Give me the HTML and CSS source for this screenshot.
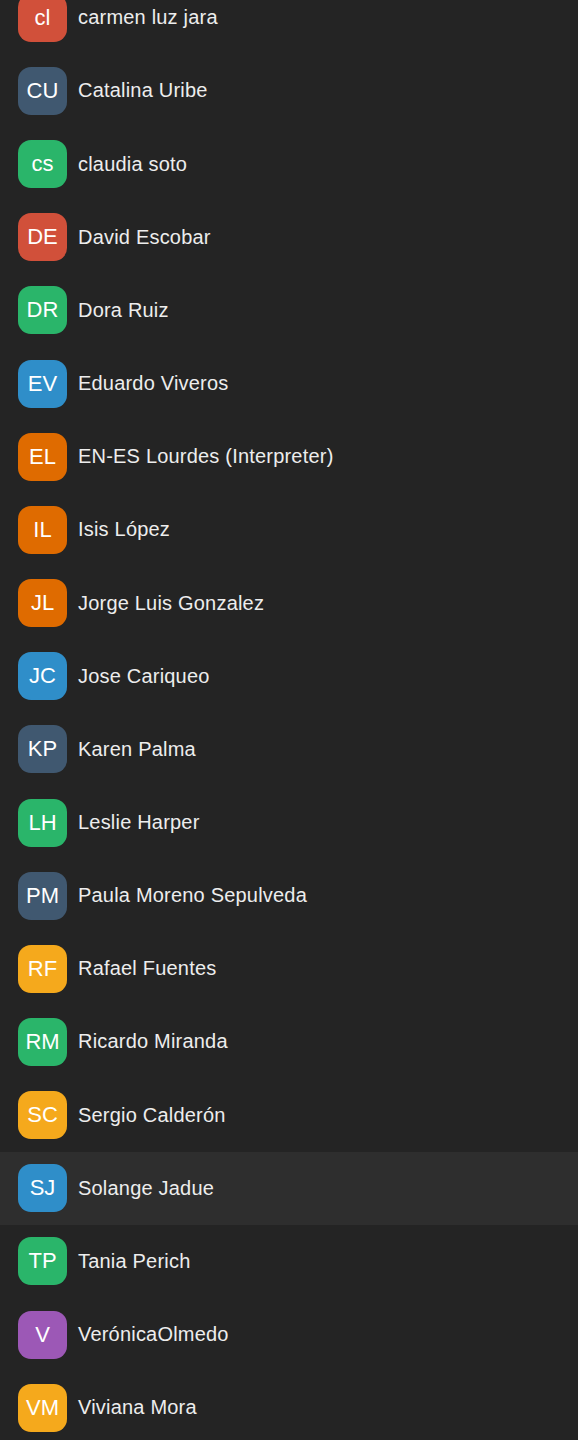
FILE: index.html
```html
<!DOCTYPE html>
<html lang="en">
<head>
    <meta charset="UTF-8">
    <meta name="viewport" content="width=device-width, initial-scale=1.0">
    <link rel="stylesheet" href="styles.css">
    <title>Participants</title>
</head>
<body>
    <ul class="participant-list">
        <li class="participant"><span class="avatar red">cl</span><span class="name">carmen luz jara</span></li>
        <li class="participant"><span class="avatar slate">CU</span><span class="name">Catalina Uribe</span></li>
        <li class="participant"><span class="avatar green">cs</span><span class="name">claudia soto</span></li>
        <li class="participant"><span class="avatar red">DE</span><span class="name">David Escobar</span></li>
        <li class="participant"><span class="avatar green">DR</span><span class="name">Dora Ruiz</span></li>
        <li class="participant"><span class="avatar blue">EV</span><span class="name">Eduardo Viveros</span></li>
        <li class="participant"><span class="avatar orange">EL</span><span class="name">EN-ES Lourdes (Interpreter)</span></li>
        <li class="participant"><span class="avatar orange">IL</span><span class="name">Isis López</span></li>
        <li class="participant"><span class="avatar orange">JL</span><span class="name">Jorge Luis Gonzalez</span></li>
        <li class="participant"><span class="avatar blue">JC</span><span class="name">Jose Cariqueo</span></li>
        <li class="participant"><span class="avatar slate">KP</span><span class="name">Karen Palma</span></li>
        <li class="participant"><span class="avatar green">LH</span><span class="name">Leslie Harper</span></li>
        <li class="participant"><span class="avatar slate">PM</span><span class="name">Paula Moreno Sepulveda</span></li>
        <li class="participant"><span class="avatar yellow">RF</span><span class="name">Rafael Fuentes</span></li>
        <li class="participant"><span class="avatar green">RM</span><span class="name">Ricardo Miranda</span></li>
        <li class="participant"><span class="avatar yellow">SC</span><span class="name">Sergio Calderón</span></li>
        <li class="participant selected"><span class="avatar blue">SJ</span><span class="name">Solange Jadue</span></li>
        <li class="participant"><span class="avatar green">TP</span><span class="name">Tania Perich</span></li>
        <li class="participant"><span class="avatar purple">V</span><span class="name">VerónicaOlmedo</span></li>
        <li class="participant"><span class="avatar yellow">VM</span><span class="name">Viviana Mora</span></li>
    </ul>
</body>
</html>
```

FILE: styles.css
```css
body {
    margin: 0;
    padding: 0;
    background: #242424;
    font-family: 'Liberation Sans', Arial, sans-serif;
    color: #ededed;
    height: 1440px;
    overflow: hidden;
}

.participant-list {
    list-style: none;
    margin: -18.8px 0 0 0;
    padding: 0;
}

.participant {
    display: flex;
    align-items: center;
    gap: 11px;
    height: 73.16px;
    padding-left: 18px;
}

.participant.selected {
    background: #2e2e2e;
}

.avatar {
    width: 49px;
    height: 48px;
    flex-shrink: 0;
    border-radius: 13px;
    display: flex;
    align-items: center;
    justify-content: center;
    color: #fff;
    font-size: 22px;
}

.name {
    font-size: 20px;
    letter-spacing: 0.2px;
}

.red { background: #d1503a; }
.slate { background: #405870; }
.green { background: #2ab56a; }
.blue { background: #2f8ec9; }
.orange { background: #df6b00; }
.yellow { background: #f5a91c; }
.purple { background: #9c58b6; }
```
